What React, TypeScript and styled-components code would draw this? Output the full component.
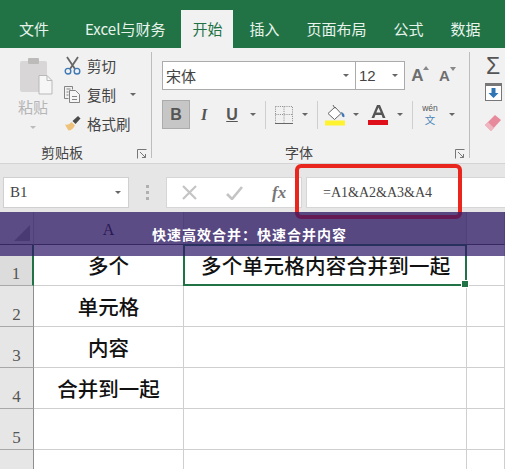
import React from "react";
import styled, { createGlobalStyle } from "styled-components";

const CJK = `"Noto Sans CJK SC", "Noto Sans", sans-serif`;
const SERIF = `"Liberation Serif", "Noto Sans CJK SC", serif`;

const Global = createGlobalStyle`
  html, body { margin: 0; padding: 0; background: #fff; }
  * { box-sizing: border-box; }
`;

const Page = styled.div`
  position: relative;
  width: 505px;
  height: 469px;
  overflow: hidden;
  font-family: ${CJK};
  background: #fff;
`;

/* ---------- tabs ---------- */
const TabBar = styled.div`
  display: flex;
  align-items: flex-end;
  gap: 5px;
  height: 48px;
  padding-left: 8px;
  background: #217346;
`;
const Tab = styled.div<{ $active?: boolean }>`
  display: flex;
  align-items: center;
  justify-content: center;
  height: 38px;
  padding: 0 11px 2px;
  font-size: 15px;
  white-space: nowrap;
  color: ${(p) => (p.$active ? "#217346" : "#e8f3ec")};
  background: ${(p) => (p.$active ? "#f1f1f1" : "transparent")};
  &:first-child { margin-right: 9px; }
`;

/* ---------- ribbon ---------- */
const Ribbon = styled.div`
  display: flex;
  height: 116px;
  padding-top: 4px;
  background: #f1f1f1;
  border-bottom: 1px solid #d4d4d4;
`;
const Group = styled.div<{ $w: number; $last?: boolean }>`
  display: flex;
  flex-direction: column;
  flex: none;
  width: ${(p) => p.$w}px;
  height: 106px;
  border-right: ${(p) => (p.$last ? "none" : "1px solid #bdbdbd")};
`;
const Footer = styled.div<{ $left: number }>`
  display: flex;
  align-items: center;
  justify-content: space-between;
  height: 12px;
  margin-top: auto;
  padding: 0 4px 0 ${(p) => p.$left}px;
  font-size: 14px;
  color: #444;
`;
const Launcher = styled.svg`
  width: 10px;
  height: 10px;
  margin-top: 4px;
`;

/* clipboard */
const ClipBody = styled.div`
  display: flex;
  padding-left: 16px;
`;
const PasteCol = styled.div`
  display: flex;
  flex-direction: column;
  align-items: center;
  width: 38px;
  padding-top: 5px;
`;
const PasteArt = styled.svg`
  margin-left: 3px;
`;
const PasteLabel = styled.div`
  margin: 3px 4px 0 0;
  font-size: 15px;
  line-height: 18px;
  color: #b5b5b5;
`;
const PasteCaret = styled.div`
  margin: 10px 4px 0 0;
  width: 0;
  height: 0;
  border-left: 3px solid transparent;
  border-right: 3px solid transparent;
  border-top: 3px solid #bbb;
`;
const ClipList = styled.div`
  display: flex;
  flex-direction: column;
  gap: 5px;
  margin-left: 10px;
  padding-top: 1px;
`;
const ClipItem = styled.div`
  display: flex;
  align-items: center;
  gap: 6px;
  height: 24px;
  font-size: 14.5px;
  color: #444;
  white-space: nowrap;
`;
const Caret = styled.span<{ $ml?: number }>`
  display: inline-block;
  flex: none;
  width: 0;
  height: 0;
  margin-left: ${(p) => p.$ml ?? 0}px;
  border-left: 3.5px solid transparent;
  border-right: 3.5px solid transparent;
  border-top: 3.5px solid #666;
`;

/* font */
const FontBody = styled.div`
  display: flex;
  flex-direction: column;
  gap: 10px;
  padding: 9px 0 0 10px;
`;
const FontRow = styled.div`
  display: flex;
  align-items: center;
  height: 29px;
`;
const Combo = styled.div<{ $w: number; $latin?: boolean }>`
  display: flex;
  align-items: center;
  justify-content: space-between;
  width: ${(p) => p.$w}px;
  height: 29px;
  margin-right: -1px;
  padding: 0 6px 0 3px;
  background: #fff;
  border: 1px solid #ababab;
  font-family: ${(p) => (p.$latin ? `"Liberation Sans", sans-serif` : CJK)};
  font-size: 15px;
  color: #444;
`;
const GrowGlyph = styled.div<{ $small?: boolean }>`
  position: relative;
  width: 27px;
  text-align: center;
  font-family: "Liberation Sans", sans-serif;
  font-size: ${(p) => (p.$small ? 15 : 17)}px;
  font-weight: 700;
  color: #6e6e6e;
`;
const Peak = styled.svg`
  position: absolute;
  top: 0;
  right: 2px;
`;
const Slot = styled.div<{ $w: number; $active?: boolean }>`
  display: flex;
  align-items: center;
  justify-content: center;
  flex: none;
  width: ${(p) => p.$w}px;
  height: 29px;
  ${(p) => (p.$active ? "background: #c6c6c6; border: 1px solid #ababab;" : "")}
`;
const StyleGlyph = styled.span<{ $i?: boolean; $u?: boolean }>`
  font-family: ${(p) => (p.$i ? `"Liberation Serif", serif` : `"Liberation Sans", sans-serif`)};
  font-size: 16px;
  font-weight: 700;
  font-style: ${(p) => (p.$i ? "italic" : "normal")};
  text-decoration: ${(p) => (p.$u ? "underline" : "none")};
  color: #555;
`;
const Divider = styled.div`
  flex: none;
  width: 1px;
  height: 28px;
  background: #cfcfcf;
`;
const WenStack = styled.div`
  display: flex;
  flex-direction: column;
  align-items: center;
  gap: 1px;
`;
const WenTop = styled.span`
  font-family: "Liberation Sans", sans-serif;
  font-size: 8.5px;
  line-height: 9px;
  color: #555;
`;
const WenChar = styled.span`
  font-size: 10.5px;
  line-height: 11px;
  color: #4a86b8;
`;

/* edit */
const EditBody = styled.div`
  display: flex;
  flex-direction: column;
  align-items: center;
  width: 26px;
  margin-left: 10px;
`;
const Sigma = styled.div`
  font-family: "Liberation Sans", sans-serif;
  font-size: 23px;
  line-height: 27px;
  margin: 1px 0 3px;
  color: #555;
`;
const EraserWrap = styled.div`
  margin-top: 13px;
  line-height: 0;
`;

/* ---------- formula bar ---------- */
const FormulaBar = styled.div`
  display: flex;
  align-items: center;
  height: 48px;
  padding: 13px 0 4px 3px;
  background: #e6e6e6;
`;
const NameBox = styled.div`
  display: flex;
  align-items: center;
  justify-content: space-between;
  flex: none;
  width: 126px;
  height: 31px;
  padding: 0 7px 0 6px;
  background: #fff;
  border: 1px solid #d0d0d0;
  font-family: ${SERIF};
  font-size: 15px;
  color: #444;
`;
const Grip = styled.div`
  display: flex;
  flex-direction: column;
  gap: 3px;
  flex: none;
  margin: 0 17px;
`;
const GripDot = styled.span`
  width: 3px;
  height: 3px;
  background: #b0b0b0;
`;
const FxButtons = styled.div`
  display: flex;
  align-items: center;
  flex: none;
  width: 136px;
  height: 31px;
  padding-left: 1px;
  background: #fff;
  border: 1px solid #d6d6d6;
`;
const FxSlot = styled.div<{ $w: number }>`
  display: flex;
  align-items: center;
  justify-content: center;
  width: ${(p) => p.$w}px;
`;
const FxLabel = styled.span`
  font-family: "Liberation Serif", serif;
  font-style: italic;
  font-weight: 700;
  font-size: 17px;
  color: #777;
`;
const FormulaInput = styled.div`
  display: flex;
  align-items: center;
  flex: 1;
  height: 31px;
  margin-left: 4px;
  padding: 1px 0 0 16px;
  background: #fff;
  border: 1px solid #d6d6d6;
  border-right: none;
  font-family: ${SERIF};
  font-size: 14px;
  color: #444;
`;

/* ---------- sheet ---------- */
const Sheet = styled.div`
  display: grid;
  grid-template-columns: 34px 150px 283px 1fr;
  grid-template-rows: 33px 41px 41px 41px 41px 41px 20px;
`;
const Corner = styled.div`
  display: flex;
  align-items: flex-end;
  justify-content: flex-end;
  padding: 0 3px 3px 0;
  background: #cdcdcd;
  border-right: 1px solid #a8a8a8;
  border-bottom: 1px solid #555;
`;
const ColHead = styled.div<{ $sel?: boolean }>`
  display: flex;
  align-items: center;
  justify-content: center;
  padding-top: 3px;
  background: ${(p) => (p.$sel ? "#c0c0c0" : "#cdcdcd")};
  border-right: 1px solid #a8a8a8;
  border-bottom: 1px solid #555;
  font-family: ${SERIF};
  font-size: 16px;
  color: #222;
`;
const RowHead = styled.div<{ $sel?: boolean }>`
  display: flex;
  align-items: flex-end;
  justify-content: center;
  padding-bottom: 1px;
  background: ${(p) => (p.$sel ? "#dcdcdc" : "#e6e6e6")};
  border-right: ${(p) => (p.$sel ? "2px solid #217346" : "1px solid #8f8f8f")};
  border-bottom: 1px solid #a8a8a8;
  font-family: "Liberation Serif", serif;
  font-size: 17px;
  color: #555;
`;
const Cell = styled.div`
  display: flex;
  align-items: center;
  justify-content: center;
  border-right: 1px solid #cfcfcf;
  border-bottom: 1px solid #cfcfcf;
  font-family: ${CJK};
  font-size: 20.5px;
  font-weight: 500;
  color: #111;
  white-space: nowrap;
`;
const SelectedCell = styled(Cell)`
  position: relative;
  justify-content: flex-start;
  margin: -1px 0 0 -1px;
  padding-left: 16px;
  letter-spacing: 0.3px;
  border: 2px solid #217346;
`;
const Handle = styled.span`
  position: absolute;
  right: -4px;
  bottom: -4px;
  width: 6px;
  height: 6px;
  background: #217346;
  border: 1px solid #fff;
  box-sizing: content-box;
`;

/* ---------- overlays ---------- */
const RedBox = styled.div`
  position: absolute;
  left: 295px;
  top: 164px;
  width: 167px;
  height: 55px;
  border: 4px solid #e8261e;
  border-radius: 6px;
`;
const Banner = styled.div`
  position: absolute;
  left: 0;
  top: 212px;
  width: 505px;
  height: 44px;
  display: flex;
  align-items: center;
  justify-content: center;
  padding-right: 6px;
  background: rgba(44, 21, 104, 0.7);
  color: #fff;
  font-size: 14px;
  font-weight: 700;
  letter-spacing: 1px;
`;

/* ---------- icons ---------- */
const PasteIcon = () => (
  <PasteArt width="35" height="38" viewBox="0 0 35 38">
    <rect x="1" y="4" width="27" height="31" rx="2" fill="#d8d6d6" />
    <rect x="9" y="1" width="11" height="6" rx="1" fill="#bdbaba" />
    <path d="M20 18.5h8l5 5v13.5h-13z" fill="#f6f6f6" stroke="#b9b9b9" />
    <path d="M28 18.5v5h5" fill="none" stroke="#b9b9b9" />
  </PasteArt>
);
const CutIcon = () => (
  <svg width="17" height="19" viewBox="0 0 17 19" fill="none">
    <path d="M3 1l8 12M14 1L6 13" stroke="#666" strokeWidth="1.8" />
    <circle cx="4" cy="15.2" r="2.8" stroke="#3f79b5" strokeWidth="1.4" />
    <circle cx="13" cy="15.2" r="2.8" stroke="#3f79b5" strokeWidth="1.4" />
  </svg>
);
const CopyIcon = () => (
  <svg width="17" height="18" viewBox="0 0 17 18" fill="none" stroke="#777" strokeWidth=".9">
    <path d="M.5 1.5h8v3M.5 1.5v12h4" />
    <path d="M5.5 5.5h6l4 4v8h-10z" fill="#f6f6f6" />
    <path d="M2.5 4h4M2.5 7h2M2.5 10h2M8 11.5h5M8 14.5h5" />
  </svg>
);
const BrushIcon = () => (
  <svg width="17" height="17" viewBox="0 0 17 17">
    <path d="M1 9.5c3 .5 5-.5 6.5-2.500L11 10.500C9.500 13 7 16 4.500 15.500 3.500 14 2 11.500 1 9.500z" fill="#eec27a" />
    <path d="M8.500 6l5.500-5 2.500 2.500-5 5.500z" fill="#4a4a4a" />
  </svg>
);
const LaunchIcon = () => (
  <Launcher viewBox="0 0 10 10" fill="none" stroke="#777">
    <path d="M.5 9.500v-9h9" />
    <path d="M3 3l5.500 5.500M8.500 5v3.500H5" />
  </Launcher>
);
const BorderIcon = () => (
  <svg width="18" height="18" viewBox="0 0 18 18" fill="none">
    <path d="M.5.500h17v16M.5.500v16M9 .5v16M.5 8.500h17" stroke="#888" strokeDasharray="1 1.2" />
    <path d="M0 17.500h18" stroke="#666" />
  </svg>
);
const FillIcon = () => (
  <svg width="21" height="22" viewBox="0 0 21 22">
    <path d="M3 9.500L10 3l6 6.500-6.500 6z" fill="#fff" stroke="#666" />
    <path d="M8 1l2 3.500" stroke="#666" />
    <path d="M16 8c2 .5 3.500 2 3.500 4s-2 1-2.500 0z" fill="#3f79b5" />
    <rect x="0" y="16.500" width="20" height="5" fill="#fff22e" />
  </svg>
);
const ColorA = () => (
  <svg width="21" height="20" viewBox="0 0 21 20">
    <path d="M3.500 13L9 0h3l5.500 13h-2.800l-1.100-3H7.400l-1.100 3zM8.300 7.500h4.400L10.500 2.500z" fill="#555" fillRule="evenodd" />
    <rect x="0" y="15" width="20" height="5" fill="#e0101a" />
  </svg>
);
const FillDown = () => (
  <svg width="17" height="18" viewBox="0 0 17 18">
    <rect x=".5" y=".5" width="16" height="17" fill="#fff" stroke="#777" />
    <rect x="0" y="0" width="17" height="3" fill="#777" />
    <path d="M6.500 5h4v5h3l-5 5-5-5h3z" fill="#2f74b5" />
  </svg>
);
const EraserIcon = () => (
  <svg width="18" height="18" viewBox="0 0 18 18">
    <path d="M1 11L11 1l6 5-10 11z" fill="#e78a9b" />
    <path d="M1 11l3-3 6 6-3 3z" fill="#f0b6c0" />
  </svg>
);
const CrossIcon = () => (
  <svg width="15" height="15" viewBox="0 0 15 15" stroke="#c4c4c4" strokeWidth="2.2">
    <path d="M1 1l13 13M14 1L1 14" />
  </svg>
);
const CheckIcon = () => (
  <svg width="17" height="14" viewBox="0 0 17 14" fill="none" stroke="#c4c4c4" strokeWidth="2.6">
    <path d="M1 8l5 5L16 1" />
  </svg>
);
const CornerMark = () => (
  <svg width="16" height="16" viewBox="0 0 16 16">
    <path d="M16 0v16H0z" fill="#8f8f8f" />
  </svg>
);

const tabs = ["文件", "Excel与财务", "开始", "插入", "页面布局", "公式", "数据"];

export default function App() {
  return (
    <Page>
      <Global />
      <TabBar>
        {tabs.map((t) => (
          <Tab key={t} $active={t === "开始"}>{t}</Tab>
        ))}
      </TabBar>

      <Ribbon>
        <Group $w={152}>
          <ClipBody>
            <PasteCol>
              <PasteIcon />
              <PasteLabel>粘贴</PasteLabel>
              <PasteCaret />
            </PasteCol>
            <ClipList>
              <ClipItem><CutIcon />剪切</ClipItem>
              <ClipItem><CopyIcon />复制<Caret $ml={8} /></ClipItem>
              <ClipItem><BrushIcon />格式刷</ClipItem>
            </ClipList>
          </ClipBody>
          <Footer $left={41}>剪贴板<LaunchIcon /></Footer>
        </Group>

        <Group $w={318}>
          <FontBody>
            <FontRow>
              <Combo $w={194}>宋体<Caret /></Combo>
              <Combo $w={50} $latin>12<Caret /></Combo>
              <GrowGlyph>
                A
                <Peak width="6" height="4" viewBox="0 0 6 4"><path d="M0 4l3-4 3 4z" fill="#888" /></Peak>
              </GrowGlyph>
              <GrowGlyph $small>
                A
                <Peak width="6" height="4" viewBox="0 0 6 4"><path d="M0 0l3 4 3-4z" fill="#888" /></Peak>
              </GrowGlyph>
            </FontRow>
            <FontRow>
              <Slot $w={28} $active><StyleGlyph>B</StyleGlyph></Slot>
              <Slot $w={28}><StyleGlyph $i>I</StyleGlyph></Slot>
              <Slot $w={28}><StyleGlyph $u>U</StyleGlyph></Slot>
              <Slot $w={14}><Caret /></Slot>
              <Slot $w={5} />
              <Divider />
              <Slot $w={35}><BorderIcon /></Slot>
              <Slot $w={8}><Caret /></Slot>
              <Slot $w={8} />
              <Divider />
              <Slot $w={35}><FillIcon /></Slot>
              <Slot $w={6}><Caret /></Slot>
              <Slot $w={38}><ColorA /></Slot>
              <Slot $w={6}><Caret /></Slot>
              <Slot $w={9} />
              <Divider />
              <Slot $w={34}>
                <WenStack><WenTop>wén</WenTop><WenChar>文</WenChar></WenStack>
              </Slot>
              <Slot $w={10}><Caret /></Slot>
            </FontRow>
          </FontBody>
          <Footer $left={133}>字体<LaunchIcon /></Footer>
        </Group>

        <Group $w={35} $last>
          <EditBody>
            <Sigma>Σ</Sigma>
            <FillDown />
            <EraserWrap><EraserIcon /></EraserWrap>
          </EditBody>
        </Group>
      </Ribbon>

      <FormulaBar>
        <NameBox>B1<Caret /></NameBox>
        <Grip><GripDot /><GripDot /><GripDot /></Grip>
        <FxButtons>
          <FxSlot $w={44}><CrossIcon /></FxSlot>
          <FxSlot $w={46}><CheckIcon /></FxSlot>
          <FxSlot $w={44}><FxLabel>fx</FxLabel></FxSlot>
        </FxButtons>
        <FormulaInput>=A1&amp;A2&amp;A3&amp;A4</FormulaInput>
      </FormulaBar>

      <Sheet>
        <Corner><CornerMark /></Corner>
        <ColHead>A</ColHead>
        <ColHead $sel />
        <ColHead />

        <RowHead $sel>1</RowHead>
        <Cell>多个</Cell>
        <SelectedCell>多个单元格内容合并到一起<Handle /></SelectedCell>
        <Cell />

        <RowHead>2</RowHead>
        <Cell>单元格</Cell>
        <Cell />
        <Cell />

        <RowHead>3</RowHead>
        <Cell>内容</Cell>
        <Cell />
        <Cell />

        <RowHead>4</RowHead>
        <Cell>合并到一起</Cell>
        <Cell />
        <Cell />

        <RowHead>5</RowHead>
        <Cell />
        <Cell />
        <Cell />

        <RowHead />
        <Cell />
        <Cell />
        <Cell />
      </Sheet>

      <RedBox />
      <Banner>快速高效合并：快速合并内容</Banner>
    </Page>
  );
}
